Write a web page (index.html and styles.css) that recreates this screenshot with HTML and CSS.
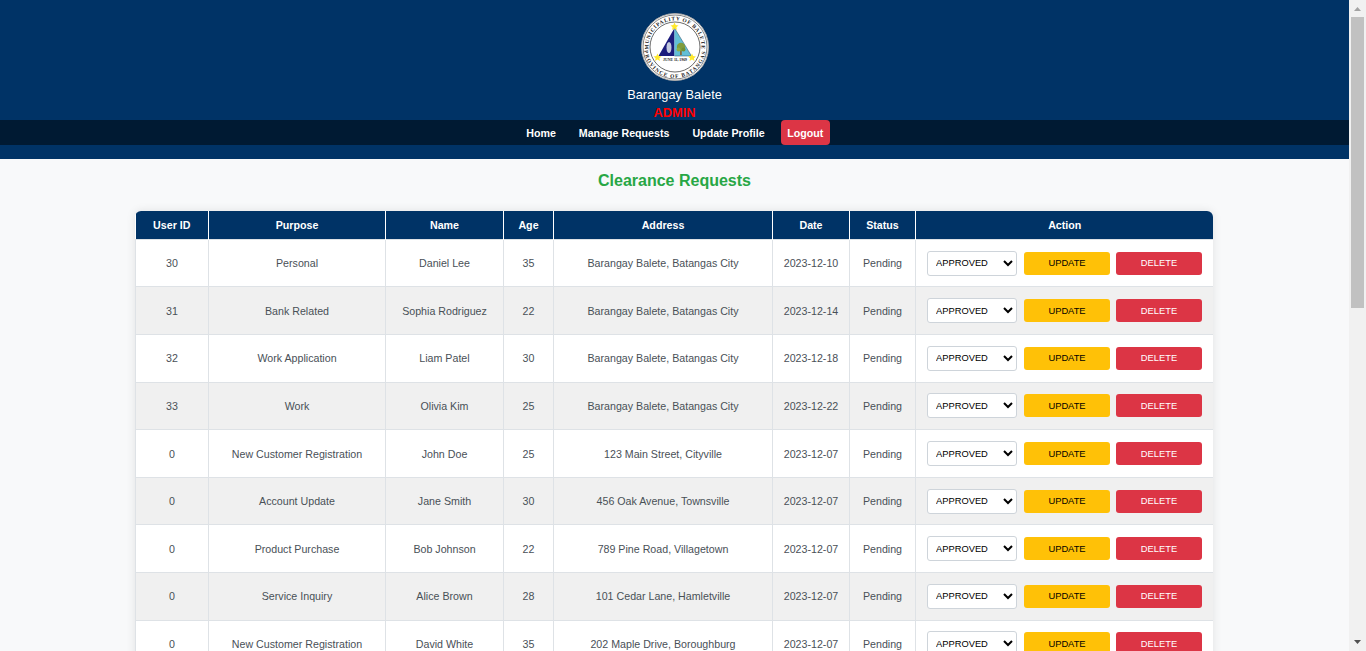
FILE: index.html

```html
<!DOCTYPE html>
<html lang="en">
  <head>
    <meta charset="UTF-8">
    <meta name="viewport" content="width=device-width, initial-scale=1">
    <title>Clearance Requests</title>
    <link rel="stylesheet" href="styles.css">
  </head>
  <body>
    <header class="site-header">
      <svg class="logo" viewBox="0 0 68 68" role="img" aria-label="Municipality of Balete seal">
        <defs>
          <path id="arc-top" d="M10 45.200 A26.500 26.500 0 1 1 58 45.200"/>
          <path id="arc-bottom" d="M3 34 A31 31 0 0 0 65 34"/>
        </defs>
        <circle cx="34" cy="34" r="33.500" fill="#fff" stroke="#a8a8a8"/>
        <circle cx="34" cy="34" r="32" fill="none" stroke="#666" stroke-width=".8"/>
        <circle cx="34" cy="34" r="25" fill="#fff" stroke="#444" stroke-width=".8"/>
        <text class="seal-text"><textPath href="#arc-top" startOffset="50%" text-anchor="middle">MUNICIPALITY OF BALETE</textPath></text>
        <text class="seal-text seal-text-low"><textPath href="#arc-bottom" startOffset="50%" text-anchor="middle">PROVINCE OF BATANGAS</textPath></text>
        <path d="M33.500 15 V43 H17.500 Z" fill="#1c1c7c"/>
        <path d="M33.500 15 V43 H50.500 Z" fill="#63bfd6"/>
        <path d="M33.500 15 L50.500 43 H33.500" fill="none" stroke="#2b4a63" stroke-width=".5"/>
        <ellipse cx="28" cy="34.500" rx="2.500" ry="5.500" fill="#c3cadf"/>
        <path d="M39 36 h1.800 v6 h-1.800 Z" fill="#8a6b3a"/>
        <circle cx="40" cy="34" r="4.200" fill="#7f9c3d"/>
        <circle cx="37.500" cy="36.500" r="2" fill="#8fae46"/>
        <circle cx="42.500" cy="36.500" r="2" fill="#6f8f35"/>
        <path class="star" d="M33.500 9.500 l1.200 2.600 2.800 .3 -2.100 1.900 .6 2.800 -2.500-1.500 -2.500 1.500 .6-2.800 -2.100-1.900 2.800-.3 Z"/>
        <path class="star" d="M16.500 40.500 l1.200 2.600 2.800 .3 -2.100 1.900 .6 2.800 -2.500-1.500 -2.500 1.500 .6-2.800 -2.100-1.900 2.800-.3 Z"/>
        <path class="star" d="M51 40.500 l1.200 2.600 2.800 .3 -2.100 1.900 .6 2.800 -2.500-1.500 -2.500 1.500 .6-2.800 -2.100-1.900 2.800-.3 Z"/>
        <text class="seal-date" x="34" y="47.500" text-anchor="middle">JUNE 11, 1969</text>
      </svg>
      <div class="brand">Barangay Balete</div>
      <div class="role">ADMIN</div>
      <nav class="main-nav">
        <a href="#">Home</a>
        <a href="#">Manage Requests</a>
        <a href="#">Update Profile</a>
        <a href="#" class="logout">Logout</a>
      </nav>
    </header>

    <main class="content">
      <h2 class="page-title">Clearance Requests</h2>
      <div class="table-wrap">
        <table class="requests">
          <colgroup>
            <col class="col-id"><col class="col-purpose"><col class="col-name"><col class="col-age">
            <col class="col-address"><col class="col-date"><col class="col-status"><col class="col-action">
          </colgroup>
          <thead>
            <tr><th>User ID</th><th>Purpose</th><th>Name</th><th>Age</th><th>Address</th><th>Date</th><th>Status</th><th>Action</th></tr>
          </thead>
          <tbody>
            <tr>
              <td>30</td><td>Personal</td><td>Daniel Lee</td><td>35</td><td>Barangay Balete, Batangas City</td><td>2023-12-10</td><td>Pending</td>
              <td><form class="row-actions"><select class="status-select"><option>APPROVED</option><option>REJECTED</option></select><button type="button" class="btn btn-update">UPDATE</button><button type="button" class="btn btn-delete">DELETE</button></form></td>
            </tr>
            <tr>
              <td>31</td><td>Bank Related</td><td>Sophia Rodriguez</td><td>22</td><td>Barangay Balete, Batangas City</td><td>2023-12-14</td><td>Pending</td>
              <td><form class="row-actions"><select class="status-select"><option>APPROVED</option><option>REJECTED</option></select><button type="button" class="btn btn-update">UPDATE</button><button type="button" class="btn btn-delete">DELETE</button></form></td>
            </tr>
            <tr>
              <td>32</td><td>Work Application</td><td>Liam Patel</td><td>30</td><td>Barangay Balete, Batangas City</td><td>2023-12-18</td><td>Pending</td>
              <td><form class="row-actions"><select class="status-select"><option>APPROVED</option><option>REJECTED</option></select><button type="button" class="btn btn-update">UPDATE</button><button type="button" class="btn btn-delete">DELETE</button></form></td>
            </tr>
            <tr>
              <td>33</td><td>Work</td><td>Olivia Kim</td><td>25</td><td>Barangay Balete, Batangas City</td><td>2023-12-22</td><td>Pending</td>
              <td><form class="row-actions"><select class="status-select"><option>APPROVED</option><option>REJECTED</option></select><button type="button" class="btn btn-update">UPDATE</button><button type="button" class="btn btn-delete">DELETE</button></form></td>
            </tr>
            <tr>
              <td>0</td><td>New Customer Registration</td><td>John Doe</td><td>25</td><td>123 Main Street, Cityville</td><td>2023-12-07</td><td>Pending</td>
              <td><form class="row-actions"><select class="status-select"><option>APPROVED</option><option>REJECTED</option></select><button type="button" class="btn btn-update">UPDATE</button><button type="button" class="btn btn-delete">DELETE</button></form></td>
            </tr>
            <tr>
              <td>0</td><td>Account Update</td><td>Jane Smith</td><td>30</td><td>456 Oak Avenue, Townsville</td><td>2023-12-07</td><td>Pending</td>
              <td><form class="row-actions"><select class="status-select"><option>APPROVED</option><option>REJECTED</option></select><button type="button" class="btn btn-update">UPDATE</button><button type="button" class="btn btn-delete">DELETE</button></form></td>
            </tr>
            <tr>
              <td>0</td><td>Product Purchase</td><td>Bob Johnson</td><td>22</td><td>789 Pine Road, Villagetown</td><td>2023-12-07</td><td>Pending</td>
              <td><form class="row-actions"><select class="status-select"><option>APPROVED</option><option>REJECTED</option></select><button type="button" class="btn btn-update">UPDATE</button><button type="button" class="btn btn-delete">DELETE</button></form></td>
            </tr>
            <tr>
              <td>0</td><td>Service Inquiry</td><td>Alice Brown</td><td>28</td><td>101 Cedar Lane, Hamletville</td><td>2023-12-07</td><td>Pending</td>
              <td><form class="row-actions"><select class="status-select"><option>APPROVED</option><option>REJECTED</option></select><button type="button" class="btn btn-update">UPDATE</button><button type="button" class="btn btn-delete">DELETE</button></form></td>
            </tr>
            <tr>
              <td>0</td><td>New Customer Registration</td><td>David White</td><td>35</td><td>202 Maple Drive, Boroughburg</td><td>2023-12-07</td><td>Pending</td>
              <td><form class="row-actions"><select class="status-select"><option>APPROVED</option><option>REJECTED</option></select><button type="button" class="btn btn-update">UPDATE</button><button type="button" class="btn btn-delete">DELETE</button></form></td>
            </tr>
          </tbody>
        </table>
      </div>
    </main>

    <div class="scrollbar" aria-hidden="true">
      <svg class="scroll-arrow" viewBox="0 0 17 17"><path d="M8.500 7 L12 11 H5 Z" fill="#a3a3a3"/></svg>
      <div class="scroll-track"><div class="scroll-thumb"></div></div>
      <svg class="scroll-arrow" viewBox="0 0 17 17"><path d="M5 6 H12 L8.500 10 Z" fill="#505050"/></svg>
    </div>
  </body>
</html>
```

FILE: styles.css

```css
body {
  margin: 0;
  padding-right: 17px;
  background: #f8f9fa;
  color: #495057;
  font-family: "Liberation Sans", Arial, sans-serif;
  font-size: 12px;
}

/* the browser hides its own scrollbar in the capture, so it is drawn here */
.scrollbar {
  position: fixed;
  top: 0;
  right: 0;
  bottom: 0;
  display: flex;
  flex-direction: column;
  width: 17px;
  background: #f1f1f1;
}

.scroll-arrow {
  display: block;
  flex: none;
  width: 17px;
  height: 17px;
}

.scroll-track {
  flex: 1;
  padding: 0 2px;
}

.scroll-thumb {
  height: 291px;
  background: #c1c1c1;
}

.site-header {
  display: flex;
  flex-direction: column;
  align-items: center;
  height: 159px;
  padding-top: 13px;
  box-sizing: border-box;
  background: #003366;
  color: #fff;
}

.logo {
  flex: none;
  width: 68px;
  height: 68px;
}

.seal-text {
  font-family: "Liberation Serif", "Times New Roman", serif;
  font-size: 5.400px;
  font-weight: bold;
  letter-spacing: .7px;
  fill: #222;
}

.seal-text-low {
  letter-spacing: 1.1px;
}

.seal-date {
  font-family: "Liberation Serif", "Times New Roman", serif;
  font-size: 3.800px;
  font-weight: bold;
  fill: #222;
}

.star {
  fill: #ffe92e;
}

.brand {
  margin-top: 6px;
  font-size: 12.800px;
  line-height: 16px;
}

.role {
  margin-top: 2px;
  color: #ff0000;
  font-size: 12.800px;
  font-weight: bold;
  line-height: 16px;
}

.main-nav {
  display: flex;
  align-self: stretch;
  justify-content: center;
  gap: 9px;
  height: 25px;
  margin-top: -1px;
  background: #001a33;
}

.main-nav a {
  padding: 0 7px;
  border-radius: 4px;
  color: #fff;
  font-size: 10.670px;
  font-weight: bold;
  line-height: 26px;
  text-decoration: none;
}

.main-nav .logout {
  padding: 0 6.500px;
  background: #dc3545;
}

.page-title {
  margin: 0;
  padding-top: 12px;
  color: #28a745;
  font-size: 16px;
  line-height: 19px;
  text-align: center;
}

.content {
  padding-bottom: 46px;
}

.table-wrap {
  width: 1078px;
  margin: 21px 0 0 135px;
  border-radius: 6px;
  overflow: hidden;
  box-shadow: 0 0 10px rgba(0, 0, 0, .1);
}

.requests {
  width: 100%;
  table-layout: fixed;
  border-collapse: collapse;
  background: #fff;
}

.col-id { width: 73px; }
.col-purpose { width: 177px; }
.col-name { width: 118px; }
.col-age { width: 50px; }
.col-address { width: 219px; }
.col-date { width: 77px; }
.col-status { width: 66px; }
.col-action { width: 298px; }

.requests th {
  height: 28.400px;
  padding: 0 8px;
  box-sizing: border-box;
  border-left: 1px solid #fff;
  background: #003366;
  color: #fff;
  font-size: 10.670px;
  font-weight: bold;
}

.requests th:first-child {
  border-left: 0;
}

.requests td {
  height: 47.600px;
  padding: 0;
  box-sizing: border-box;
  border: 1px solid #dee2e6;
  font-size: 10.670px;
  text-align: center;
}

.requests tbody tr:nth-child(even) {
  background: #f0f0f0;
}

.row-actions {
  display: flex;
  align-items: center;
  justify-content: center;
  gap: 6px;
}

.status-select {
  width: 90px;
  height: 25px;
  margin-right: 1px;
  padding: 0 4px;
  border: 1px solid #ced4da;
  border-radius: 3px;
  background-color: #fff;
  color: #000;
  font-family: inherit;
  font-size: 9.330px;
}

.btn {
  width: 86px;
  height: 23px;
  padding: 0;
  border: 0;
  border-radius: 3px;
  font-family: inherit;
  font-size: 9.330px;
}

.btn-update {
  background: #ffc107;
  color: #000;
}

.btn-delete {
  background: #dc3545;
  color: #fff;
}
```
